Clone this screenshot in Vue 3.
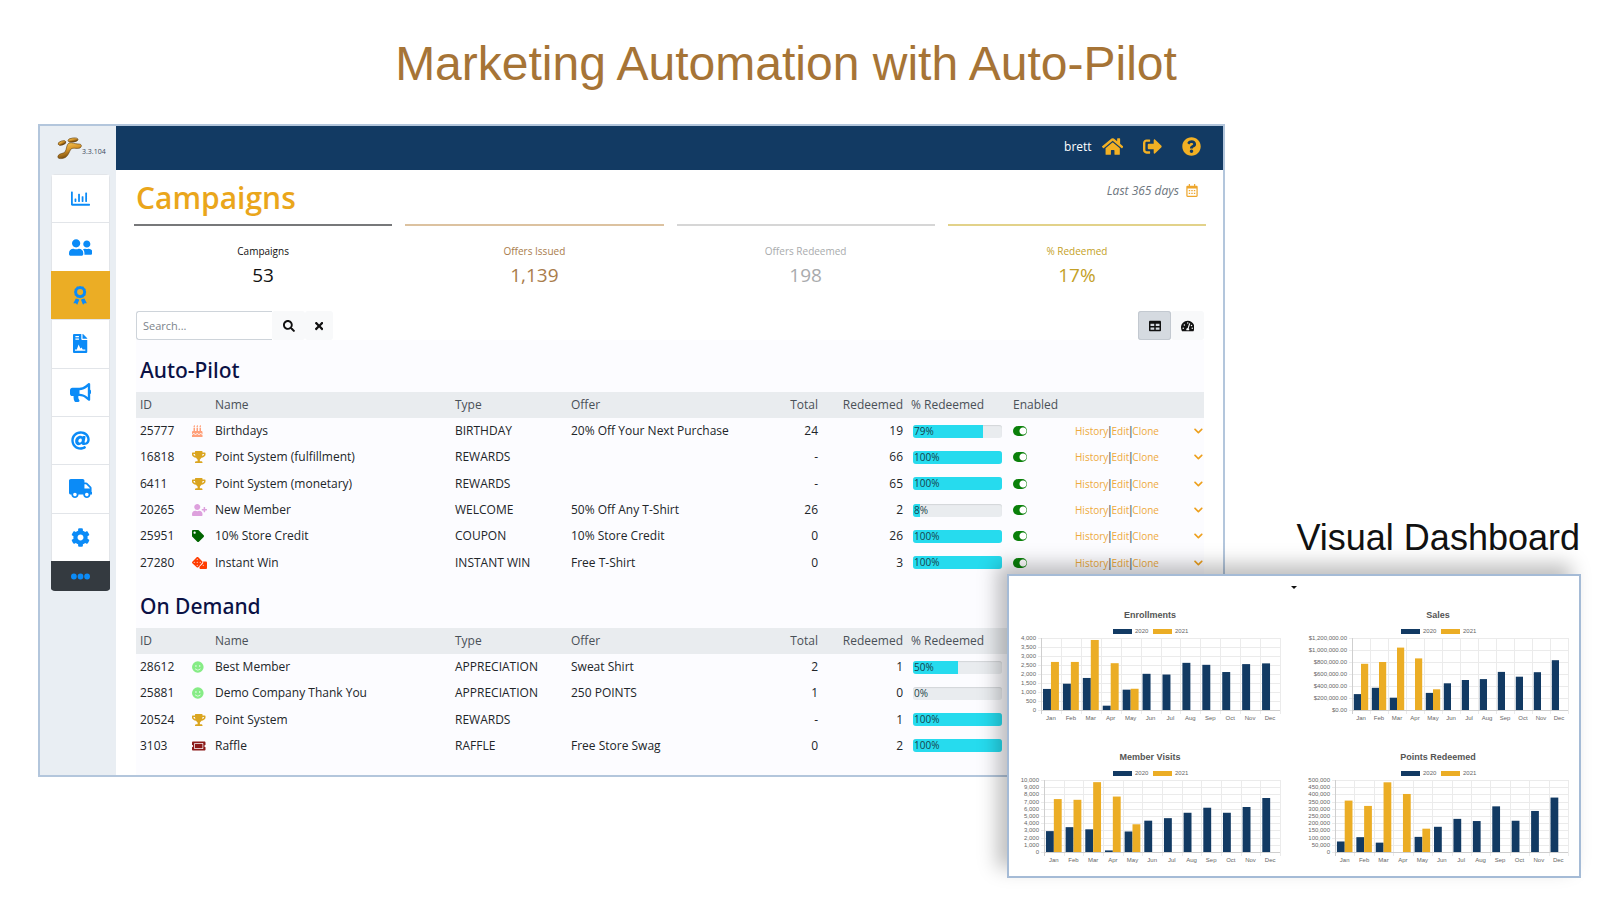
<script setup>
import { ref } from 'vue'

const icons = {
  chart: { w: 512, d: 'M396.8 352h22.4c6.4 0 12.8-6.4 12.8-12.8V108.8c0-6.4-6.4-12.8-12.8-12.8h-22.4c-6.4 0-12.8 6.4-12.8 12.8v230.4c0 6.4 6.4 12.8 12.8 12.8zm-192 0h22.4c6.4 0 12.8-6.4 12.8-12.8V140.8c0-6.4-6.4-12.8-12.8-12.8h-22.4c-6.4 0-12.8 6.4-12.8 12.8v198.4c0 6.4 6.4 12.8 12.8 12.8zm96 0h22.4c6.4 0 12.8-6.4 12.8-12.8V204.8c0-6.4-6.4-12.8-12.8-12.8h-22.4c-6.4 0-12.8 6.4-12.8 12.8v134.4c0 6.4 6.4 12.8 12.8 12.8zM496 400H48V80c0-8.84-7.16-16-16-16H16C7.16 64 0 71.16 0 80v336c0 17.67 14.33 32 32 32h464c8.84 0 16-7.16 16-16v-16c0-8.84-7.16-16-16-16zm-387.2-48h22.4c6.4 0 12.8-6.4 12.8-12.8v-70.4c0-6.4-6.4-12.8-12.8-12.8h-22.4c-6.4 0-12.8 6.4-12.8 12.8v70.4c0 6.4 6.4 12.8 12.8 12.8z' },
  users: { w: 640, d: 'M192 256c61.9 0 112-50.1 112-112S253.9 32 192 32 80 82.1 80 144s50.1 112 112 112zm76.8 32h-8.3c-20.8 10-43.9 16-68.5 16s-47.6-6-68.5-16h-8.3C51.6 288 0 339.6 0 403.2V432c0 26.5 21.5 48 48 48h288c26.5 0 48-21.5 48-48v-28.8c0-63.6-51.6-115.2-115.2-115.2zM480 256c53 0 96-43 96-96s-43-96-96-96-96 43-96 96 43 96 96 96zm48 32h-3.8c-13.9 4.8-28.6 8-44.2 8s-30.3-3.2-44.2-8H432c-20.4 0-39.2 5.9-55.7 15.4 24.4 26.3 39.7 61.2 39.7 99.8v38.4c0 2.2-.5 4.3-.6 6.4H592c26.5 0 48-21.5 48-48 0-61.9-50.1-112-112-112z' },
  award: { w: 384, d: 'M192 0l42 14 44 2 26 36 36 26 2 44 14 42-14 42-2 44-36 26-26 36-44 2-42 14-42-14-44-2-26-36-36-26-2-44-14-42 14-42 2-44 36-26 26-36 44-2zM192 82a82 82 0 1 0 0 164 82 82 0 1 0 0-164zM76 340l60 8 34 22-56 138-42-44-62 4zM308 340l-60 8-34 22 56 138 42-44 62 4z' },
  contract: { w: 384, d: 'M24 0h200v136c0 13 11 24 24 24h136v328c0 13-11 24-24 24H24c-13 0-24-11-24-24V24C0 11 11 0 24 0zM64 56v32h96V56zM64 120v32h96v-32zM52 448h280v-32h-72l-26-52-36 26-46-106-50 132H52zM256 0h14l114 114v14H256z' },
  bullhorn: { w: 576, d: 'M576 240c0-23.63-12.95-44.04-32-55.12V32.01C544 23.26 537.02 0 512 0c-7.12 0-14.19 2.38-19.98 7.02l-85.03 68.03C364.28 109.19 310.66 128 256 128H64c-35.35 0-64 28.65-64 64v96c0 35.35 28.65 64 64 64h33.7c-1.39 10.48-2.18 21.14-2.18 32 0 39.77 9.26 77.35 25.56 110.94 5.19 10.69 16.52 17.06 28.4 17.06h74.28c26.05 0 41.69-29.84 25.9-50.56-16.4-21.52-26.15-48.36-26.15-77.44 0-11.11 1.62-21.79 4.41-32H256c54.66 0 108.28 18.81 150.98 52.95l85.03 68.03a32.023 32.023 0 0 0 19.98 7.02c24.92 0 32-22.78 32-32V295.13C563.05 284.04 576 263.63 576 240zm-96 141.42l-33.05-26.44C392.95 311.78 325.12 288 256 288v-96c69.12 0 136.95-23.78 190.95-66.98L480 98.58v282.84z' },
  at: { w: 512, d: 'M256 8C118.941 8 8 118.919 8 256c0 137.059 110.919 248 248 248 48.154 0 95.342-14.14 135.408-40.223 12.005-7.815 14.625-24.288 5.552-35.372l-10.177-12.433c-7.671-9.371-21.179-11.667-31.373-5.129C325.92 429.757 291.314 440 256 440c-101.458 0-184-82.542-184-184S154.542 72 256 72c100.139 0 184 57.619 184 160 0 38.786-21.093 79.742-58.17 83.693-17.349-.454-16.91-12.857-13.476-30.024l23.433-121.11C394.653 149.75 383.308 136 368.225 136h-44.981a13.518 13.518 0 0 0-13.432 11.993l-.01.092c-14.697-17.901-40.448-21.775-59.971-21.775-74.58 0-137.831 62.234-137.831 151.46 0 65.303 36.785 105.87 96 105.87 26.984 0 57.369-15.637 74.991-38.333 9.522 34.104 40.613 34.104 70.71 34.104C462.609 379.41 504 307.798 504 232 504 95.653 394.023 8 256 8zm-21.68 304.43c-22.249 0-36.07-15.623-36.07-40.771 0-44.993 30.779-72.729 58.63-72.729 22.292 0 35.601 15.241 35.601 40.77 0 45.061-33.875 72.73-58.161 72.73z' },
  truck: { w: 640, d: 'M624 352h-16V243.9c0-12.7-5.1-24.9-14.1-33.9L494 110.1c-9-9-21.2-14.1-33.9-14.1H416V48c0-26.5-21.5-48-48-48H48C21.5 0 0 21.5 0 48v320c0 26.5 21.5 48 48 48h16c0 53 43 96 96 96s96-43 96-96h128c0 53 43 96 96 96s96-43 96-96h48c8.8 0 16-7.2 16-16v-32c0-8.8-7.2-16-16-16zM160 464c-26.5 0-48-21.5-48-48s21.5-48 48-48 48 21.5 48 48-21.5 48-48 48zm320 0c-26.5 0-48-21.5-48-48s21.5-48 48-48 48 21.5 48 48-21.5 48-48 48zm80-208H416V144h44.1l99.9 99.9V256z' },
  cog: { w: 512, d: 'M487.4 315.7l-42.6-24.6c4.3-23.2 4.3-47 0-70.2l42.6-24.6c4.9-2.8 7.1-8.6 5.5-14-11.1-35.6-30-67.8-54.7-94.6-3.8-4.1-10-5.1-14.8-2.3L380.8 110c-17.9-15.4-38.5-27.3-60.8-35.1V25.8c0-5.6-3.9-10.5-9.4-11.7-36.7-8.2-74.3-7.8-109.2 0-5.5 1.2-9.4 6.1-9.4 11.7V75c-22.2 7.9-42.8 19.8-60.8 35.1L88.7 85.5c-4.9-2.8-11-1.9-14.8 2.3-24.7 26.7-43.6 58.9-54.7 94.6-1.7 5.4.6 11.2 5.5 14L67.3 221c-4.3 23.2-4.3 47 0 70.2l-42.6 24.6c-4.9 2.8-7.1 8.6-5.5 14 11.1 35.6 30 67.8 54.7 94.6 3.8 4.1 10 5.1 14.8 2.3l42.6-24.6c17.9 15.4 38.5 27.3 60.8 35.1v49.2c0 5.6 3.9 10.5 9.4 11.7 36.7 8.2 74.3 7.8 109.2 0 5.5-1.2 9.4-6.1 9.4-11.7v-49.2c22.2-7.9 42.8-19.8 60.8-35.1l42.6 24.6c4.9 2.8 11 1.9 14.8-2.3 24.7-26.7 43.6-58.9 54.7-94.6 1.5-5.5-.7-11.3-5.6-14.1zM256 336c-44.1 0-80-35.9-80-80s35.9-80 80-80 80 35.9 80 80-35.9 80-80 80z' },
  dots: { w: 512, d: 'M0 256a78 78 0 1 0 156 0 78 78 0 1 0-156 0zM178 256a78 78 0 1 0 156 0 78 78 0 1 0-156 0zM356 256a78 78 0 1 0 156 0 78 78 0 1 0-156 0z' },
  home: { w: 576, d: 'M280.37 148.26L96 300.11V464a16 16 0 0 0 16 16l112.06-.29a16 16 0 0 0 15.92-16V368a16 16 0 0 1 16-16h64a16 16 0 0 1 16 16v95.64a16 16 0 0 0 16 16.05L464 480a16 16 0 0 0 16-16V300L295.67 148.26a12.19 12.19 0 0 0-15.3 0zM571.6 251.47L488 182.56V44.05a12 12 0 0 0-12-12h-56a12 12 0 0 0-12 12v72.61L318.47 43a48 48 0 0 0-61 0L4.34 251.47a12 12 0 0 0-1.6 16.9l25.5 31A12 12 0 0 0 45.15 301l235.22-193.74a12.19 12.19 0 0 1 15.3 0L530.9 301a12 12 0 0 0 16.9-1.6l25.5-31a12 12 0 0 0-1.7-16.93z' },
  signout: { w: 512, d: 'M497 273L329 441c-15 15-41 4.5-41-17v-96H152c-13.3 0-24-10.7-24-24v-96c0-13.3 10.7-24 24-24h136V88c0-21.4 25.9-32 41-17l168 168c9.3 9.4 9.3 24.6 0 34zM192 436v-40c0-6.6-5.4-12-12-12H96c-17.7 0-32-14.3-32-32V160c0-17.7 14.3-32 32-32h84c6.6 0 12-5.4 12-12V76c0-6.6-5.4-12-12-12H96c-53 0-96 43-96 96v192c0 53 43 96 96 96h84c6.6 0 12-5.4 12-12z' },
  help: { w: 512, d: 'M504 256c0 136.997-111.043 248-248 248S8 392.997 8 256C8 119.083 119.043 8 256 8s248 111.083 248 248zM262.655 90c-54.497 0-89.255 22.957-116.549 63.758-3.536 5.286-2.353 12.415 2.715 16.258l34.699 26.31c5.205 3.947 12.621 3.008 16.665-2.122 17.864-22.658 30.113-35.797 57.303-35.797 20.429 0 45.698 13.148 45.698 32.958 0 14.976-12.363 22.667-32.534 33.976C247.128 238.528 216 254.941 216 296v4c0 6.627 5.373 12 12 12h56c6.627 0 12-5.373 12-12v-1.333c0-28.462 83.186-29.647 83.186-106.667 0-58.002-60.165-102-116.531-102zM256 338c-25.365 0-46 20.635-46 46 0 25.364 20.635 46 46 46s46-20.636 46-46c0-25.365-20.635-46-46-46z' },
  calendar: { w: 448, d: 'M400 64h-48V12c0-7-5-12-12-12h-24c-7 0-12 5-12 12v52H144V12c0-7-5-12-12-12h-24c-7 0-12 5-12 12v52H48C21 64 0 85 0 112v352c0 27 21 48 48 48h352c27 0 48-21 48-48V112c0-27-21-48-48-48zm-6 400H54c-3 0-6-3-6-6V176h352v282c0 3-3 6-6 6zM96 232h56v56H96zM196 232h56v56h-56zM296 232h56v56h-56zM96 340h56v56H96zM196 340h56v56h-56zM296 340h56v56h-56z' },
  search: { w: 512, d: 'M505 442.7L405.3 343c-4.5-4.5-10.6-7-17-7H372c27.6-35.3 44-79.7 44-128C416 93.1 322.9 0 208 0S0 93.1 0 208s93.1 208 208 208c48.3 0 92.7-16.4 128-44v16.3c0 6.4 2.5 12.5 7 17l99.7 99.7c9.4 9.4 24.6 9.4 33.9 0l28.3-28.3c9.4-9.4 9.4-24.6.1-34zM208 336c-70.7 0-128-57.2-128-128 0-70.7 57.2-128 128-128 70.7 0 128 57.2 128 128 0 70.7-57.2 128-128 128z' },
  times: { w: 352, d: 'M243 256l100 100c12 12 12 32 0 44l-23 23c-12 12-32 12-44 0L176 323 76 423c-12 12-32 12-44 0L9 400c-12-12-12-32 0-44l100-100L9 156c-12-12-12-32 0-44l23-23c12-12 32-12 44 0l100 100L276 89c12-12 32-12 44 0l23 23c12 12 12 32 0 44z' },
  table: { w: 512, d: 'M48 32h416c27 0 48 21 48 48v352c0 27-21 48-48 48H48c-27 0-48-21-48-48V80c0-27 21-48 48-48zM64 160v96h160v-96zM288 160v96h160v-96zM64 320v96h160v-96zM288 320v96h160v-96z' },
  gauge: { w: 576, d: 'M288 32C129 32 0 161 0 320c0 53 14 102 39 145 6 9 16 15 27 15h444c11 0 21-6 27-15 25-43 39-92 39-145C576 161 447 32 288 32zM288 96a32 32 0 1 1 0 64 32 32 0 1 1 0-64zM96 384a32 32 0 1 1 0-64 32 32 0 1 1 0 64zM144 240a32 32 0 1 1 0-64 32 32 0 1 1 0 64zM390 166l-62 184c15 12 24 30 24 50 0 12-3 22-9 32H233c-6-10-9-20-9-32 0-34 27-62 60-64l62-185c4-13 18-20 30-15 13 4 18 18 14 30zM448 200a32 32 0 1 1 0 64 32 32 0 1 1 0-64zM480 384a32 32 0 1 1 0-64 32 32 0 1 1 0 64z' },
  cake: { w: 448, d: 'M448 384c-28.02 0-31.26-32-74.5-32-43.43 0-46.825 32-74.75 32-27.695 0-31.454-32-74.75-32-42.842 0-47.218 32-74.5 32-28.148 0-31.202-32-74.75-32-43.547 0-46.653 32-74.75 32v-80c0-26.5 21.5-48 48-48h16V112h64v144h64V112h64v144h64V112h64v144h16c26.5 0 48 21.5 48 48v80zm0 128H0v-96c43.356 0 46.767-32 74.75-32 27.951 0 31.253 32 74.75 32 42.843 0 47.217-32 74.5-32 28.148 0 31.201 32 74.75 32 43.357 0 46.767-32 74.75-32 27.488 0 31.252 32 74.5 32v96zM96 96c-17.75 0-32-14.25-32-32 0-31 32-23 32-64 12 0 32 29.5 32 56s-14.25 40-32 40zm128 0c-17.75 0-32-14.25-32-32 0-31 32-23 32-64 12 0 32 29.5 32 56s-14.25 40-32 40zm128 0c-17.75 0-32-14.25-32-32 0-31 32-23 32-64 12 0 32 29.5 32 56s-14.25 40-32 40z' },
  trophy: { w: 576, d: 'M552 64H448V24c0-13.3-10.7-24-24-24H152c-13.3 0-24 10.7-24 24v40H24C10.7 64 0 74.7 0 88v56c0 35.7 22.5 72.4 61.9 100.7 31.5 22.7 69.8 37.1 110 41.7C203.3 338.5 240 360 240 360v72h-48c-35.3 0-64 20.7-64 56v12c0 6.6 5.4 12 12 12h296c6.6 0 12-5.4 12-12v-12c0-35.3-28.7-56-64-56h-48v-72s36.7-21.5 68.1-73.6c40.3-4.6 78.6-19 110-41.7 39.3-28.3 61.9-65 61.9-100.7V88c0-13.3-10.7-24-24-24zM99.3 192.8C74.9 175.2 64 155.6 64 144v-16h64.2c1 32.6 5.8 61.2 12.8 86.2-15.1-5.2-29.2-12.4-41.7-21.4zM512 144c0 16.1-17.7 36.1-35.3 48.8-12.5 9-26.7 16.2-41.8 21.4 7-25 11.8-53.6 12.8-86.2H512v16z' },
  userplus: { w: 640, d: 'M624 208h-64v-64c0-8.8-7.2-16-16-16h-32c-8.8 0-16 7.2-16 16v64h-64c-8.8 0-16 7.2-16 16v32c0 8.8 7.2 16 16 16h64v64c0 8.8 7.2 16 16 16h32c8.8 0 16-7.2 16-16v-64h64c8.8 0 16-7.2 16-16v-32c0-8.8-7.2-16-16-16zm-400 48c70.7 0 128-57.3 128-128S294.7 0 224 0 96 57.3 96 128s57.3 128 128 128zm89.6 32h-16.7c-22.2 10.2-46.9 16-72.9 16s-50.6-5.8-72.9-16h-16.7C60.2 288 0 348.2 0 422.4V464c0 26.5 21.5 48 48 48h352c26.5 0 48-21.5 48-48v-41.6c0-74.2-60.2-134.4-134.4-134.4z' },
  tag: { w: 512, d: 'M0 252.118V48C0 21.49 21.49 0 48 0h204.118a48 48 0 0 1 33.941 14.059l211.882 211.882c18.745 18.745 18.745 49.137 0 67.882L293.823 497.941c-18.745 18.745-49.137 18.745-67.882 0L14.059 286.059A48 48 0 0 1 0 252.118zM112 64c-26.51 0-48 21.49-48 48s21.49 48 48 48 48-21.49 48-48-21.49-48-48-48z' },
  dice: { w: 640, d: 'M592 192H473c13 30 7 67-18 91L320 419v45c0 27 21 48 48 48h224c27 0 48-21 48-48V240c0-27-21-48-48-48zM480 376a24 24 0 1 1 0-48 24 24 0 1 1 0 48zM433 180L268 14c-19-19-49-19-68 0L14 200c-19 19-19 49 0 68l186 165c19 19 49 19 68 0l165-185c19-19 19-49 0-68zM96 248a24 24 0 1 1 0-48 24 24 0 1 1 0 48zM224 376a24 24 0 1 1 0-48 24 24 0 1 1 0 48zM224 248a24 24 0 1 1 0-48 24 24 0 1 1 0 48zM224 120a24 24 0 1 1 0-48 24 24 0 1 1 0 48zM352 248a24 24 0 1 1 0-48 24 24 0 1 1 0 48z' },
  smile: { w: 496, d: 'M248 8a248 248 0 1 0 0 496 248 248 0 1 0 0-496zM168 176a32 32 0 1 1 0 64 32 32 0 1 1 0-64zM328 176a32 32 0 1 1 0 64 32 32 0 1 1 0-64zM363 346c-29 34-70 54-115 54s-86-20-115-54c-13-16 11-36 25-20 22 27 55 42 90 42s68-15 90-42c14-16 38 4 25 20z' },
  ticket: { w: 576, d: 'M128 160h320v192H128V160zm400 96c0 26.51 21.49 48 48 48v96c0 26.51-21.49 48-48 48H48c-26.51 0-48-21.49-48-48v-96c26.51 0 48-21.49 48-48s-21.49-48-48-48v-96c0-26.51 21.49-48 48-48h480c26.51 0 48 21.49 48 48v96c-26.51 0-48 21.49-48 48zm-48-104c0-13.255-10.745-24-24-24H120c-13.255 0-24 10.745-24 24v208c0 13.255 10.745 24 24 24h336c13.255 0 24-10.745 24-24V152z' },
  chevron: { w: 448, d: 'M207 381L13 187c-9-9-9-25 0-34l23-22c9-10 24-10 34 0l154 154 154-154c10-10 25-10 34 0l23 22c9 9 9 25 0 34L241 381c-9 9-25 9-34 0z' },
}

const nav = [
  ['chart', 'Reports'], ['users', 'Members'], ['award', 'Campaigns'], ['contract', 'Contracts'],
  ['bullhorn', 'Promotions'], ['at', 'Email'], ['truck', 'Orders'], ['cog', 'Settings'], ['dots', 'More'],
]

const stats = [
  { label: 'Campaigns', value: '53', cls: 'black' },
  { label: 'Offers Issued', value: '1,139', cls: 'bronze' },
  { label: 'Offers Redeemed', value: '198', cls: 'silver' },
  { label: '% Redeemed', value: '17%', cls: 'gold' },
]

const row = (id, icon, name, type, offer, total, redeemed, pct) =>
  ({ id, icon, name, type, offer, total, redeemed, pct, enabled: true })

const groups = ref([
  {
    title: 'Auto-Pilot', manage: true, cls: 'auto',
    rows: [
      row('25777', 'cake', 'Birthdays', 'BIRTHDAY', '20% Off Your Next Purchase', '24', '19', 79),
      row('16818', 'trophy', 'Point System (fulfillment)', 'REWARDS', '', '-', '66', 100),
      row('6411', 'trophy', 'Point System (monetary)', 'REWARDS', '', '-', '65', 100),
      row('20265', 'userplus', 'New Member', 'WELCOME', '50% Off Any T-Shirt', '26', '2', 8),
      row('25951', 'tag', '10% Store Credit', 'COUPON', '10% Store Credit', '0', '26', 100),
      row('27280', 'dice', 'Instant Win', 'INSTANT WIN', 'Free T-Shirt', '0', '3', 100),
    ],
  },
  {
    title: 'On Demand', manage: false, cls: 'demand',
    rows: [
      row('28612', 'smile', 'Best Member', 'APPRECIATION', 'Sweat Shirt', '2', '1', 50),
      row('25881', 'smile', 'Demo Company Thank You', 'APPRECIATION', '250 POINTS', '1', '0', 0),
      row('20524', 'trophy', 'Point System', 'REWARDS', '', '-', '1', 100),
      row('3103', 'ticket', 'Raffle', 'RAFFLE', 'Free Store Swag', '0', '2', 100),
    ],
  },
])

const months = ['Jan', 'Feb', 'Mar', 'Apr', 'May', 'Jun', 'Jul', 'Aug', 'Sep', 'Oct', 'Nov', 'Dec']
const thousands = n => n.toLocaleString('en-US')
const plot = { top: 37, height: 72, right: 271 }

const charts = [
  { title: 'Enrollments', left: 32, max: 4000, step: 500, fmt: thousands,
    a: [1170, 1460, 1780, 240, 1130, 2010, 1970, 2620, 2510, 2110, 2550, 2590], b: [2670, 2670, 3890, 2600, 1180] },
  { title: 'Sales', left: 55, max: 1200000, step: 200000, fmt: n => '$' + thousands(n) + '.00',
    a: [265000, 370000, 205000, 0, 285000, 445000, 500000, 515000, 635000, 555000, 630000, 830000], b: [770000, 800000, 1040000, 860000, 345000] },
  { title: 'Member Visits', left: 35, max: 10000, step: 1000, fmt: thousands,
    a: [2900, 3450, 3150, 220, 2850, 4350, 4700, 5450, 6150, 5450, 6250, 7500], b: [7350, 7250, 9700, 7700, 3850] },
  { title: 'Points Redeemed', left: 38, max: 500000, step: 50000, fmt: thousands,
    a: [73000, 103000, 65000, 0, 105000, 175000, 230000, 215000, 317000, 217000, 285000, 378000], b: [357000, 320000, 484000, 403000, 162000] },
].map(c => {
  const pitch = (plot.right - c.left) / 12
  const bars = (values, slot) => values.map((v, i) => {
    const h = (v / c.max) * plot.height
    return { x: c.left + pitch * (i + 0.1 + slot * 0.4), y: plot.top + plot.height - h, w: pitch * 0.4, h }
  })
  const ticks = []
  for (let v = 0; v <= c.max; v += c.step) {
    ticks.push({ y: Math.round(plot.top + plot.height * (1 - v / c.max)), text: c.fmt(v) })
  }
  return {
    title: c.title, left: c.left, ticks,
    cols: months.map((m, i) => ({ m, x: Math.round(c.left + pitch * (i + 1)), mid: c.left + pitch * (i + 0.5) })),
    navy: bars(c.a, 0), amber: bars(c.b, 1),
  }
})

const query = ref('')
const view = ref('table')
</script>

<template>
  <main class="page">
    <h1 class="headline">Marketing Automation with Auto-Pilot</h1>

    <section class="window">
      <aside class="side">
        <div class="brand">
          <svg class="logo" viewBox="0 0 28 24" aria-hidden="true">
            <defs>
              <linearGradient id="gold" x1="0" y1="0" x2="0.4" y2="1">
                <stop offset="0" stop-color="#ffd667" /><stop offset="0.5" stop-color="#d9982b" /><stop offset="1" stop-color="#6b4108" />
              </linearGradient>
            </defs>
            <g fill="url(#gold)" stroke="#5c3a0c" stroke-width="0.6">
              <path d="M2 19c1-3 5-2 7-4 2-3 1-7 4-9 3-1 6 1 9 1 3 0 4 1 3 3-2 3-8 0-10 2-2 3-3 8-7 9-3 1-7 1-6-2z" />
              <ellipse cx="6" cy="6" rx="4" ry="2" transform="rotate(-18 6 6)" />
              <ellipse cx="17" cy="3" rx="5" ry="2" transform="rotate(-6 17 3)" />
            </g>
          </svg>
          <span class="version">3.3.104</span>
        </div>
        <nav class="nav" aria-label="Sections">
          <button v-for="[icon, label] in nav" :key="icon" type="button" :aria-label="label"
            :class="['nav-item', icon]">
            <svg class="nav-icon" :viewBox="`0 0 ${icons[icon].w} 512`"><path fill-rule="evenodd" :d="icons[icon].d" /></svg>
          </button>
        </nav>
      </aside>

      <div class="body">
        <header class="topbar">
          <span class="user">brett</span>
          <button v-for="[icon, label] in [['home', 'Home'], ['signout', 'Sign out'], ['help', 'Help']]" :key="icon"
            type="button" class="top-btn" :aria-label="label">
            <svg class="top-icon" :viewBox="`0 0 ${icons[icon].w} 512`"><path fill-rule="evenodd" :d="icons[icon].d" /></svg>
          </button>
        </header>

        <div class="content">
          <div class="title-row">
            <h2 class="title">Campaigns</h2>
            <button type="button" class="range">Last 365 days
              <svg class="range-icon" viewBox="0 0 448 512"><path fill-rule="evenodd" :d="icons.calendar.d" /></svg>
            </button>
          </div>

          <div class="stats">
            <div v-for="s in stats" :key="s.label" :class="['stat', s.cls]">
              <span class="stat-label">{{ s.label }}</span>
              <span class="stat-value">{{ s.value }}</span>
            </div>
          </div>

          <div class="toolbar">
            <form class="search" @submit.prevent>
              <input v-model="query" class="search-input" type="text" placeholder="Search..." aria-label="Search campaigns" />
              <button class="tool-btn wide" aria-label="Search">
                <svg class="tool-icon" viewBox="0 0 512 512"><path fill-rule="evenodd" :d="icons.search.d" /></svg>
              </button>
              <button class="tool-btn" type="button" aria-label="Clear" @click="query = ''">
                <svg class="tool-icon" viewBox="0 0 352 512"><path :d="icons.times.d" /></svg>
              </button>
            </form>
            <div class="views">
              <button v-for="[icon, id, label] in [['table', 'table', 'Table view'], ['gauge', 'board', 'Dashboard view']]" :key="id"
                type="button" :class="['tool-btn', 'wide', { active: view === id }]" :aria-label="label"
                :aria-pressed="view === id" @click="view = id">
                <svg class="tool-icon" :viewBox="`0 0 ${icons[icon].w} 512`"><path fill-rule="evenodd" :d="icons[icon].d" /></svg>
              </button>
            </div>
          </div>

          <div class="lists">
            <section v-for="g in groups" :key="g.title">
              <h3 class="group-title">{{ g.title }}</h3>
              <table :class="['grid', g.cls]">
                <colgroup>
                  <col class="c-id" /><col class="c-icon" /><col class="c-name" /><col class="c-type" /><col />
                  <col class="c-total" /><col class="c-red" /><col class="c-pct" /><col class="c-en" /><col class="c-act" /><col class="c-more" />
                </colgroup>
                <thead>
                  <tr>
                    <th scope="col">ID</th><td></td><th scope="col">Name</th><th scope="col">Type</th><th scope="col">Offer</th>
                    <th scope="col" class="num">Total</th><th scope="col" class="num">Redeemed</th><th scope="col">% Redeemed</th>
                    <th v-if="g.manage" scope="col">Enabled</th><td v-else></td><td></td><td></td>
                  </tr>
                </thead>
                <tbody>
                  <tr v-for="r in g.rows" :key="r.id">
                    <td>{{ r.id }}</td>
                    <td class="icon-cell"><svg :class="['row-icon', r.icon]" :viewBox="`0 0 ${icons[r.icon].w} 512`"><path fill-rule="evenodd" :d="icons[r.icon].d" /></svg></td>
                    <td>{{ r.name }}</td>
                    <td>{{ r.type }}</td>
                    <td>{{ r.offer }}</td>
                    <td class="num">{{ r.total }}</td>
                    <td class="num">{{ r.redeemed }}</td>
                    <td class="pct">
                      <div class="meter">
                        <div class="meter-fill" :style="{ width: r.pct + '%' }"></div>
                        <span class="meter-text">{{ r.pct }}%</span>
                      </div>
                    </td>
                    <template v-if="g.manage">
                      <td><input v-model="r.enabled" class="toggle" type="checkbox" :aria-label="`${r.name} enabled`" /></td>
                      <td class="actions"><a href="#">History</a><i>|</i><a href="#">Edit</a><i>|</i><a href="#">Clone</a></td>
                      <td class="more">
                        <button type="button" class="more-btn" :aria-label="`More for ${r.name}`">
                          <svg class="more-icon" viewBox="0 0 448 512"><path :d="icons.chevron.d" /></svg>
                        </button>
                      </td>
                    </template>
                    <template v-else><td></td><td></td><td></td></template>
                  </tr>
                </tbody>
              </table>
            </section>
          </div>
        </div>
      </div>
    </section>

    <section class="overlay">
      <h2 class="overlay-title">Visual Dashboard</h2>
      <div class="board">
        <button type="button" class="board-menu" aria-label="Dashboard menu"></button>
        <div class="charts">
          <svg v-for="c in charts" :key="c.title" class="chart" viewBox="0 0 282 142" role="img" :aria-label="c.title">
            <text class="chart-title" x="141" y="17">{{ c.title }}</text>
            <rect class="navy" x="104" y="28" width="19" height="5" />
            <text class="tick" x="126" y="32">2020</text>
            <rect class="amber" x="144" y="28" width="19" height="5" />
            <text class="tick" x="166" y="32">2021</text>
            <g shape-rendering="crispEdges">
              <line v-for="t in c.ticks" :key="t.text" class="rule" :x1="c.left - 3" :x2="plot.right" :y1="t.y" :y2="t.y" />
              <line v-for="k in c.cols" :key="k.m" class="rule" :x1="k.x" :x2="k.x" :y1="plot.top" :y2="plot.top + plot.height + 4" />
              <line class="axis" :x1="c.left" :x2="c.left" :y1="plot.top" :y2="plot.top + plot.height + 4" />
              <line class="axis" :x1="c.left" :x2="plot.right" :y1="plot.top + plot.height" :y2="plot.top + plot.height" />
            </g>
            <rect v-for="(b, i) in c.navy" :key="'n' + i" class="navy" :x="b.x" :y="b.y" :width="b.w" :height="b.h" />
            <rect v-for="(b, i) in c.amber" :key="'a' + i" class="amber" :x="b.x" :y="b.y" :width="b.w" :height="b.h" />
            <text v-for="t in c.ticks" :key="'t' + t.text" class="tick end" :x="c.left - 5" :y="t.y + 2">{{ t.text }}</text>
            <text v-for="k in c.cols" :key="'m' + k.m" class="tick mid" :x="k.mid" y="119">{{ k.m }}</text>
          </svg>
        </div>
      </div>
    </section>
  </main>
</template>

<style>
body { background: #fff; }
</style>

<style scoped>
* { box-sizing: border-box; }
h1, h2, h3 { margin: 0; font-weight: 400; }
button { border: 0; padding: 0; background: none; font: inherit; color: inherit; cursor: pointer; }
svg { display: block; fill: currentColor; }

.page {
  position: relative;
  min-height: 100vh;
  padding: 0 375px 20px 38px;
  font-family: "Open Sans", "Noto Sans", sans-serif;
  font-size: 12px;
  color: #212529;
}
.headline {
  height: 124px;
  padding-top: 35px;
  margin-right: -309px;
  text-align: center;
  font-family: "Liberation Sans", Arial, sans-serif;
  font-size: 48px;
  line-height: 58px;
  color: #a67436;
}
.window { display: flex; border: 2px solid #b3c6dc; background: #fff; }

.side { flex: 0 0 76px; padding: 0 6px 0 11px; background: #e9eef3; }
.brand { display: flex; align-items: center; height: 48px; padding: 0 0 2px 5px; }
.logo { flex: none; width: 28px; height: 24px; margin-right: -2px; }
.version { padding-top: 6px; font-size: 7px; line-height: 10px; color: #3d4a5c; }
.nav { display: flex; flex-direction: column; height: 417px; border-radius: 4px; overflow: hidden; color: #0b8bf7; }
.nav-item { flex: 1; display: flex; align-items: center; justify-content: center; background: #fff; border: 1px solid #e2e5e9; border-bottom: 0; }
.nav-item.award { background: #ebad25; border-color: #ebad25; }
.nav-item.dots { flex: 0 0 30px; background: #343a40; border-color: #343a40; }
.nav-icon { height: 19px; }

.body { flex: 1; min-width: 0; }
.topbar { display: flex; align-items: center; justify-content: flex-end; height: 44px; padding: 0 22px 3px 0; background: #123a63; color: #f2b024; }
.user { margin-right: 10px; color: #fff; }
.top-btn { margin-right: 20px; }
.top-btn:last-child { margin-right: 0; }
.top-icon { height: 19px; }

.content { padding: 0 17px 0 18px; }
.title-row { display: flex; justify-content: space-between; height: 54px; padding: 0 8px 0 2px; }
.title { padding-top: 6px; font-size: 30px; line-height: 44px; font-weight: 600; color: #eaa61b; }
.range { display: flex; gap: 7px; height: 18px; margin-top: 11px; align-items: center; font-style: italic; color: #6c757d; }
.range-icon { width: 12px; height: 13px; color: #eda62d; }

.stats { display: grid; grid-template-columns: repeat(4, 1fr); gap: 13px; }
.stat { display: flex; flex-direction: column; align-items: center; height: 87px; padding-top: 17px; border-top: 2px solid; }
.stat-label { font-size: 10px; line-height: 16px; }
.stat-value { padding-top: 2px; font-size: 19px; line-height: 28px; }
.black { border-color: #77787a; }
.black .stat-label, .black .stat-value { color: #111; }
.bronze { border-color: #dcc2a0; color: #a97c4b; }
.silver { border-color: #d6d6d6; color: #a9abad; }
.gold { border-color: #e2d28a; color: #c4a127; }

.toolbar { display: flex; justify-content: space-between; padding: 0 2px; color: #111; }
.search, .views { display: flex; height: 29px; }
.search-input { width: 136px; padding: 0 6px; border: 1px solid #ced4da; border-right: 0; border-radius: 3px 0 0 3px; font: inherit; font-size: 11px; color: #495057; outline: 0; }
.search-input::placeholder { color: #7c848b; }
.tool-btn { display: flex; align-items: center; justify-content: center; width: 28px; background: #f8f9fa; border-radius: 3px; }
.tool-btn.wide { width: 33px; }
.tool-btn.active { background: #d5dae0; box-shadow: inset 0 0 0 1px #c3c9d0; }
.tool-icon { height: 12px; }

.lists { margin: 0 2px; background: #fcfcff; padding-bottom: 16px; }
.group-title { height: 52px; padding: 15px 4px 0; font-family: "Noto Sans", "Open Sans", sans-serif; font-size: 21px; line-height: 30px; font-weight: 500; color: #0b1145; }
.grid { width: 100%; table-layout: fixed; border-collapse: collapse; }
.grid.auto { height: 184px; }
.grid.demand { height: 131px; }
th, td { padding: 0 4px; text-align: left; white-space: nowrap; font-weight: 400; line-height: 16px; vertical-align: middle; }
thead { background: #e9ecef; color: #495057; }
thead tr { height: 26px; }
.num { text-align: right; }
.c-id { width: 51px; } .c-icon { width: 24px; } .c-name { width: 240px; } .c-type { width: 116px; }
.c-total { width: 62px; } .c-red { width: 85px; } .c-pct { width: 102px; } .c-en { width: 62px; } .c-act { width: 109px; } .c-more { width: 24px; }

.icon-cell { padding: 0 0 0 5px; }
.row-icon { height: 12px; }
.cake { color: #ffa07a; } .trophy { color: #daa520; } .userplus { color: #dda0dd; } .tag { color: #006400; }
.dice { color: #ff3c00; } .smile { color: #86ec86; } .ticket { color: #8b1a1a; }

.pct { padding: 0 7px 0 6px; }
.meter { position: relative; height: 13px; border-radius: 3px; overflow: hidden; background: #e9ecef; box-shadow: inset 0 1px 1px #d3d6d9; }
.meter-fill { height: 100%; background: #26dbee; }
.meter-text { position: absolute; left: 1px; top: 0; font-size: 10px; line-height: 13px; color: #17424a; }

.toggle { appearance: none; display: block; width: 14px; height: 10px; margin: 0; border-radius: 5px; background: radial-gradient(circle at 10px 5px, #fff 3px, #0a800a 4px); }
.actions { font-size: 10px; color: #eeaa3c; }
.actions a { color: inherit; text-decoration: none; }
.actions i { font-family: "Liberation Sans", Arial, sans-serif; font-size: 12px; font-style: normal; color: #48656e; }
.more { padding: 0 1px 0 0; }
.more-btn { display: block; margin-left: auto; color: #eda01e; }
.more-icon { height: 10px; }

.overlay { position: absolute; top: 514px; right: 19px; width: 574px; font-family: "Liberation Sans", Arial, sans-serif; }
.overlay-title { height: 60px; padding: 1px 1px 0 0; text-align: right; font-size: 36px; line-height: 46px; color: #111; }
.board { height: 304px; padding-top: 10px; border: 2px solid #a5bbd6; background: #fff; box-shadow: -10px -10px 18px rgba(0, 0, 0, 0.25); }
.board-menu { display: block; width: 6px; height: 6px; margin: 0 auto; border: 3px solid transparent; border-top-color: #111; border-bottom: 0; }
.charts { display: grid; grid-template-columns: 1fr 1fr; gap: 0 6px; padding-top: 9px; }
.chart { width: 100%; }
.chart-title { font-size: 9px; font-weight: 700; text-anchor: middle; fill: #555; }
.tick { font-size: 6px; fill: #666; }
.end { text-anchor: end; }
.mid { text-anchor: middle; }
.navy { fill: #123a63; }
.amber { fill: #ebad25; }
.rule { stroke: #ebebeb; }
.axis { stroke: #cfcfcf; }
</style>
